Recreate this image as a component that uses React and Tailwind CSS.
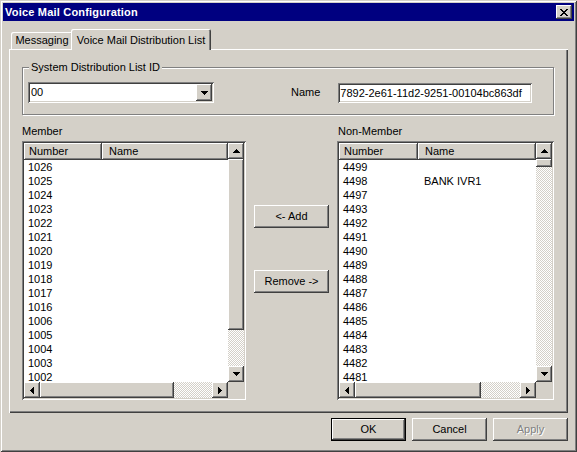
import React from "react";

const raised =
  "bg-[#d4d0c8] shadow-[inset_-1px_-1px_#404040,inset_1px_1px_#ffffff,inset_-2px_-2px_#808080]";
const sunken =
  "shadow-[inset_1px_1px_#808080,inset_-1px_-1px_#ffffff,inset_2px_2px_#404040,inset_-2px_-2px_#d4d0c8]";
const dither =
  "bg-[#ffffff] bg-[image:repeating-conic-gradient(#d4d0c8_0%_25%,#ffffff_0%_50%)] bg-[length:2px_2px]";

const Arrow = ({ dir }) => {
  const pts = {
    up: "3.5,0 7,4 0,4",
    down: "0,0 7,0 3.5,4",
    left: "0,3.5 4,0 4,7",
    right: "0,0 4,3.5 0,7",
  }[dir];
  const horiz = dir === "up" || dir === "down";
  return (
    <svg
      width={horiz ? 7 : 4}
      height={horiz ? 4 : 7}
      viewBox={horiz ? "0 0 7 4" : "0 0 4 7"}
      shapeRendering="crispEdges"
    >
      <polygon points={pts} fill="#000" />
    </svg>
  );
};

const ScrollBtn = ({ dir }) => (
  <div className={`w-[16px] h-[16px] shrink-0 flex items-center justify-center ${raised}`}>
    <Arrow dir={dir} />
  </div>
);

const CloseGlyph = () => {
  const rows = ["XX....XX", ".XX..XX.", "..XXXX..", "...XX...", "..XXXX..", ".XX..XX.", "XX....XX"];
  return (
    <svg width="8" height="7" viewBox="0 0 8 7" shapeRendering="crispEdges">
      {rows.flatMap((r, y) =>
        r.split("").map((c, x) => (c === "X" ? <rect key={`${x}-${y}`} x={x} y={y} width="1" height="1" fill="#000" /> : null))
      )}
    </svg>
  );
};

const Button = ({ children, isDefault, disabled, className = "" }) => (
  <div
    className={`w-[75px] h-[23px] flex items-center justify-center ${raised} ${
      isDefault ? "outline outline-1 outline-black -outline-offset-1 shadow-[inset_-2px_-2px_#404040,inset_2px_2px_#ffffff,inset_-3px_-3px_#808080]" : ""
    } ${disabled ? "text-[#808080] [text-shadow:1px_1px_#ffffff]" : "text-black"} ${className}`}
  >
    {children}
  </div>
);

const ListView = ({ width, numWidth, thumbV, thumbH, rows }) => {
  const contentW = width - 4 - 16;
  return (
    <div className={`h-[259px] p-[2px] bg-white ${sunken}`} style={{ width }}>
      <div className="flex h-[239px]">
        <div className="overflow-hidden" style={{ width: contentW }}>
          <div className="flex h-[17px]">
            <div className={`h-full flex items-center pl-[5px] ${raised}`} style={{ width: numWidth }}>
              Number
            </div>
            <div className={`h-full flex-1 flex items-center pl-[7px] ${raised}`}>Name</div>
          </div>
          {rows.map(([num, name]) => (
            <div key={num} className="flex h-[14px] leading-[14px]">
              <div className="pl-[4px]" style={{ width: numWidth }}>
                {num}
              </div>
              <div className="pl-[6px]">{name}</div>
            </div>
          ))}
        </div>
        <div className="w-[16px] flex flex-col">
          <ScrollBtn dir="up" />
          <div className={`shrink-0 ${raised}`} style={{ height: thumbV }} />
          <div className={`flex-1 ${dither}`} />
          <ScrollBtn dir="down" />
        </div>
      </div>
      <div className="flex h-[16px]">
        <div className="flex" style={{ width: contentW }}>
          <ScrollBtn dir="left" />
          <div className={`shrink-0 ${raised}`} style={{ width: thumbH }} />
          <div className={`flex-1 ${dither}`} />
          <ScrollBtn dir="right" />
        </div>
        <div className="w-[16px] bg-[#d4d0c8]" />
      </div>
    </div>
  );
};

const members = ["1026", "1025", "1024", "1023", "1022", "1021", "1020", "1019", "1018", "1017", "1016", "1006", "1005", "1004", "1003", "1002"].map((n) => [n, ""]);
const nonMembers = ["4499", "4498", "4497", "4493", "4492", "4491", "4490", "4489", "4488", "4487", "4486", "4485", "4484", "4483", "4482", "4481"].map((n) => [
  n,
  n === "4498" ? "BANK IVR1" : "",
]);

export default function App() {
  return (
    <div
      className="w-[577px] h-[452px] p-[3px] bg-[#d4d0c8] text-[11px] text-black shadow-[inset_1px_1px_#d4d0c8,inset_-1px_-1px_#404040,inset_2px_2px_#ffffff,inset_-2px_-2px_#808080] select-none"
      style={{ fontFamily: '"Liberation Sans", Arial, sans-serif' }}
    >
      {/* title bar */}
      <div className="h-[18px] bg-[#000080] flex items-center justify-between pl-[2px] pr-[2px]">
        <span className="text-white font-bold text-[11px] tracking-[0.2px]">Voice Mail Configuration</span>
        <div className={`w-[16px] h-[14px] flex items-center justify-center ${raised}`}>
          <CloseGlyph />
        </div>
      </div>

      <div className="px-[6px]">
        {/* tabs */}
        <div className="flex items-end mt-[8px] h-[20px]">
          <div className="ml-[2px] w-[62px] h-[17px] flex items-center justify-center rounded-t-[2px] shadow-[inset_1px_1px_#ffffff,inset_-1px_0_#404040,inset_-2px_0_#808080]">
            Messaging
          </div>
          <div className="relative z-10 -ml-[2px] -mb-[1px] w-[140px] h-[21px] flex items-start justify-center pt-[3px] bg-[#d4d0c8] rounded-t-[2px] shadow-[inset_1px_1px_#ffffff,inset_-1px_0_#404040,inset_-2px_0_#808080]">
            Voice Mail Distribution List
          </div>
        </div>

        {/* tab page */}
        <div className="w-[559px] h-[364px] pl-[13px] shadow-[inset_1px_1px_#ffffff,inset_-1px_-1px_#404040,inset_-2px_-2px_#808080]">
          <div className="pt-[18px]">
            <div className="relative w-[532px] h-[48px] border border-[#808080] shadow-[inset_1px_1px_#ffffff,1px_1px_#ffffff]">
              <span className="absolute -top-[7px] left-[6px] px-[2px] bg-[#d4d0c8] leading-[13px]">
                System Distribution List ID
              </span>
              <div className="flex items-center mt-[14px] ml-[5px]">
                <div className={`w-[186px] h-[21px] p-[2px] bg-white flex ${sunken}`}>
                  <div className="flex-1 pl-[1px] leading-[17px]">00</div>
                  <div className={`w-[16px] h-[17px] flex items-center justify-center ${raised}`}>
                    <Arrow dir="down" />
                  </div>
                </div>
                <span className="ml-[77px]">Name</span>
                <div className={`ml-[18px] w-[194px] h-[20px] py-[2px] pr-[2px] pl-[2px] bg-white leading-[16px] ${sunken}`}>
                  7892-2e61-11d2-9251-00104bc863df
                </div>
              </div>
            </div>
          </div>

          <div className="flex mt-[9px]">
            <div className="flex flex-col">
              <div className="h-[14px] leading-[14px]">Member</div>
              <div className="mt-[3px]">
                <ListView width={224} numWidth={78} thumbV={171} thumbH={134} rows={members} />
              </div>
            </div>
            <div className="ml-[8px] flex flex-col">
              <Button className="mt-[81px]">&lt;- Add</Button>
              <Button className="mt-[42px]">Remove -&gt;</Button>
            </div>
            <div className="ml-[8px] flex flex-col">
              <div className="h-[14px] leading-[14px] pl-[1px]">Non-Member</div>
              <div className="mt-[3px]">
                <ListView width={217} numWidth={79} thumbV={8} thumbH={126} rows={nonMembers} />
              </div>
            </div>
          </div>
        </div>

        {/* dialog buttons */}
        <div className="flex justify-end gap-[6px] mt-[5px] w-[559px]">
          <Button isDefault>OK</Button>
          <Button>Cancel</Button>
          <Button disabled>Apply</Button>
        </div>
      </div>
    </div>
  );
}
